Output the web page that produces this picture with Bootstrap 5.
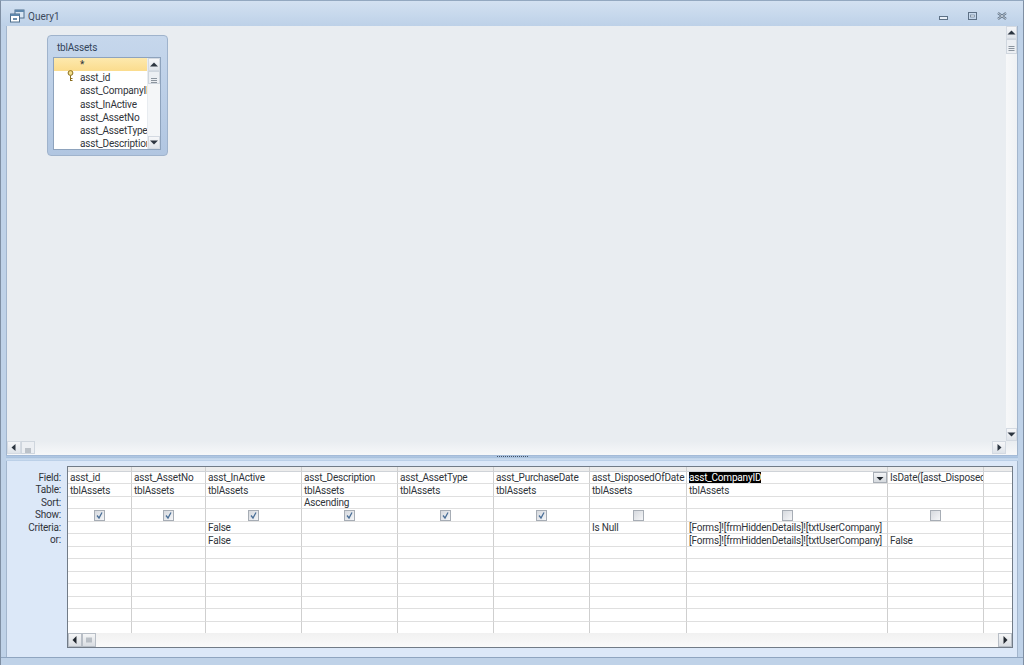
<!DOCTYPE html>
<html lang="en">
<head>
<meta charset="utf-8">
<title>Query1</title>
<link rel="stylesheet" href="https://cdn.jsdelivr.net/npm/bootstrap@5.3.0/dist/css/bootstrap.min.css">
<style>
html,body{height:100%;overflow:hidden}
body{font-family:Roboto,"Noto Sans",sans-serif;font-size:10px;letter-spacing:-.2px;color:#30343a;background:#b9cde5}
.qwin{height:665px;border-left:1px solid #7f8fa3;border-right:1px solid #7f8fa3;border-top:1px solid #93a8c0;background:#bfd2e8}
.qtitle{height:25px;background:linear-gradient(#d3e1f1,#bdd1e8);padding:5px 0 0 9px;flex:none}
.qtitle-text{font-size:10px;letter-spacing:0;color:#3c4a5c;margin-left:3px}
.winbtns{gap:20px;margin-right:16px}
.qbody{margin:0 5px;flex:1 1 auto;min-height:0}
.toppane{height:429px;flex:none;border:1px solid #a3b6cd;border-bottom:0;border-top:0}
.canvas{position:relative;flex:1 1 auto;background:#e9edf1}
.hbar,.vbar{background:#f2f4f6}
.hbar{height:14px;flex:none;background:linear-gradient(#e9edf1,#f7f8f9)}
.vbar{width:11px;flex:none;background:linear-gradient(90deg,#f7f8f9,#eef1f4)}
.sbtn{width:14px;height:13px;background:linear-gradient(#f6f7f9,#dfe4ea);border:1px solid #d4dae2;flex:none}
.sbtn svg{display:block}
.vbar .sbtn{width:11px}
.sthumb{width:14px;height:13px;background:#eceff3;border:1px solid #cfd6de;flex:none}
.vbar .sthumb{width:11px;height:15px}
.corner{width:11px;flex:none}
.tblbox{position:absolute;left:40px;top:9px;width:121px;height:121px;background:linear-gradient(#c6d7ec,#b1c6e1);border:1px solid #9fb3cc;border-radius:4px;padding:0 6px 5px 5px}
.tblname{height:21px;line-height:23px;font-size:10px;color:#33445a;padding-left:4px}
.tblinner{height:93px;background:#fff;border:1px solid #8ea3bd;overflow:hidden}
.tbllist{flex:1 1 auto;min-width:0;overflow:hidden}
.fld{height:13.3px;line-height:13.3px;padding-left:26px;white-space:nowrap;position:relative}
.fld-sel{background:linear-gradient(#fde9ae,#fbdc8d);height:13px}
.keyico{position:absolute;left:13px;top:-1px}
.tblscroll{width:13px;flex:none;background:#f4f6f8;border-left:1px solid #e8ecf0}
.tblscroll .sbtn{width:12px}
.tblscroll .sthumb{width:12px;height:13px}
.spliter{height:6px;flex:none;background:linear-gradient(#c2d5ec,#9db8d8 20%,#cfdff1 60%,#b5cbe5);position:relative;border-top:1px solid #a4bbd8}
.spliter i{position:absolute;left:491px;top:0;width:31px;height:2px;border-top:1px dotted #44556a}
.lowpane{flex:1 1 auto;background:#dce8f8;padding:5px 4px 9px 0;min-height:0;border-left:1px solid #a3b6cd;border-right:1px solid #a3b6cd}
.rlabels{width:60px;flex:none;padding-top:5.5px;text-align:right;padding-right:6px}
.rlabels div{height:12.6px;line-height:12.6px}
.gridbox{flex:1 1 auto;border:1px solid #717b87;background:#fff;min-width:0}
.qgrid{table-layout:fixed;border-collapse:separate;border-spacing:0;width:945px;font-size:10px}
.qgrid td,.qgrid th{padding:0 0 0 2px;line-height:11px;border-right:1px solid #cfcfcf;border-bottom:1px solid #dfdfdf;white-space:nowrap;overflow:hidden;font-weight:400;color:#30343a;box-sizing:border-box;position:relative}
.qgrid tbody tr:nth-child(odd) td{height:12px}
.qgrid tbody tr:nth-child(even) td{height:13px}
.qgrid th{height:5px;background:#ececec;padding:0;line-height:0;font-size:0;border-bottom:1px solid #cfd3d8}
.qgrid td:last-child,.qgrid th:last-child{border-right:0}
.qgrid td.chk{padding:0}
.c-1{width:64px}.c-2{width:74px}.c-3{width:96px}.c-4{width:97px}.c-5{width:201px}.c-6{width:29px}
.cbx{display:block;margin:1px auto 0;width:11px;height:11px;border:1px solid #a7adb5;background:linear-gradient(135deg,#d6d9de,#f5f6f8)}
.cbx svg{display:block}
.selt{background:#000;color:#fff;display:inline-block;line-height:11px;height:11px}
.ddbtn{position:absolute;right:0;top:0;width:14px;height:11px;background:linear-gradient(#f3f4f6,#d6dadf);border:1px solid #a8aeb6}
.ghbar{height:14px;flex:none;background:linear-gradient(#f1f1f1,#fafafa);margin-top:0}
.ghbar .sbtn{height:14px;background:linear-gradient(#f5f6f7,#d9dde2);border-color:#b8bec6}
.botstrip{height:8px;flex:none;border-top:1px solid #8fa5c0;margin:0 -5px;background:#bfd2e8}
</style>
</head>
<body>
<div class="qwin d-flex flex-column">
  <div class="qtitle d-flex align-items-center">
    <svg width="15" height="14" viewBox="0 0 15 14" aria-hidden="true"><rect x="5" y="1" width="9" height="8" fill="#d9e6f3" stroke="#4f6f8c"/><rect x="5" y="1" width="9" height="2" fill="#5f88ad"/><rect x=".5" y="5" width="9" height="8" fill="#fff" stroke="#4f6f8c"/><rect x=".5" y="5" width="9" height="2" fill="#5f88ad"/><rect x="3" y="9" width="4" height="2" fill="#6c8fae"/></svg>
    <span class="qtitle-text">Query1</span>
    <div class="winbtns ms-auto d-flex align-items-center">
      <svg width="9" height="4" viewBox="0 0 9 4" class="mt-1" aria-hidden="true"><rect x=".5" y=".5" width="8" height="3" fill="#e8eff7" stroke="#5d7085"/></svg>
      <svg width="9" height="8" viewBox="0 0 9 8" aria-hidden="true"><rect x=".5" y=".5" width="8" height="7" fill="none" stroke="#5d7085"/><rect x="2.500" y="3" width="4" height="2" fill="#e8eff7" stroke="#5d7085" stroke-width=".6"/></svg>
      <svg width="10" height="8" viewBox="0 0 10 8" aria-hidden="true"><path d="M1 1l8 6M9 1L1 7" stroke="#5d7085" stroke-width="2.200"/><path d="M1 1l8 6M9 1L1 7" stroke="#eef3f8" stroke-width=".7"/></svg>
    </div>
  </div>
  <div class="qbody d-flex flex-column">
    <div class="toppane d-flex">
      <div class="d-flex flex-column flex-grow-1">
        <div class="canvas">
          <div class="tblbox">
            <div class="tblname">tblAssets</div>
            <div class="tblinner d-flex">
              <div class="tbllist">
                <div class="fld fld-sel">*</div>
                <div class="fld"><svg class="keyico" width="7" height="12" viewBox="0 0 7 12" aria-hidden="true"><circle cx="3.500" cy="3" r="2.400" fill="#f4e08a" stroke="#8a6d1d"/><path d="M3.500 5.500V11M3.500 8.500h2M3.500 10.500h2" stroke="#8a6d1d" fill="none"/></svg>asst_id</div>
                <div class="fld">asst_CompanyID</div>
                <div class="fld">asst_InActive</div>
                <div class="fld">asst_AssetNo</div>
                <div class="fld">asst_AssetType</div>
                <div class="fld">asst_Description</div>
              </div>
              <div class="tblscroll d-flex flex-column">
                <div class="sbtn"><svg width="10" height="11" viewBox="0 0 10 11" aria-hidden="true"><path d="M1 7.500L5 3.500l4 4z" fill="#2c3540"/></svg></div>
                <div class="sthumb"><svg width="10" height="11" viewBox="0 0 10 11" aria-hidden="true"><path d="M2 3.500h6M2 5.500h6M2 7.500h6" stroke="#8b949e"/></svg></div>
                <div class="flex-grow-1"></div>
                <div class="sbtn"><svg width="10" height="11" viewBox="0 0 10 11" aria-hidden="true"><path d="M1 3.500l4 4 4-4z" fill="#2c3540"/></svg></div>
              </div>
            </div>
          </div>
        </div>
        <div class="hbar d-flex align-items-start">
          <div class="sbtn"><svg width="12" height="11" viewBox="0 0 12 11" aria-hidden="true"><path d="M7.500 2v7L3.500 5.500z" fill="#2c3540"/></svg></div>
          <div class="sthumb"><svg width="12" height="11" viewBox="0 0 12 11" aria-hidden="true"><path d="M4 3v5M6 3v5M8 3v5" stroke="#8b949e"/></svg></div>
          <div class="flex-grow-1"></div>
          <div class="sbtn"><svg width="12" height="11" viewBox="0 0 12 11" aria-hidden="true"><path d="M4.500 2v7l4-3.500z" fill="#2c3540"/></svg></div>
        </div>
      </div>
      <div class="d-flex flex-column corner">
        <div class="vbar d-flex flex-column flex-grow-1">
          <div class="sbtn"><svg width="9" height="11" viewBox="0 0 9 11" aria-hidden="true"><path d="M.5 7.500l4-4 4 4z" fill="#2c3540"/></svg></div>
          <div class="sthumb"><svg width="9" height="13" viewBox="0 0 9 13" aria-hidden="true"><path d="M1.500 4.500h6M1.500 6.500h6M1.500 8.500h6" stroke="#8b949e"/></svg></div>
          <div class="flex-grow-1"></div>
          <div class="sbtn"><svg width="9" height="11" viewBox="0 0 9 11" aria-hidden="true"><path d="M.5 3.500l4 4 4-4z" fill="#2c3540"/></svg></div>
        </div>
        <div class="hbar"></div>
      </div>
    </div>
    <div class="spliter"><i></i></div>
    <div class="lowpane d-flex">
      <div class="rlabels">
        <div>Field:</div><div>Table:</div><div>Sort:</div><div>Show:</div><div>Criteria:</div><div>or:</div>
      </div>
      <div class="gridbox d-flex flex-column overflow-hidden">
        <div class="flex-grow-1 overflow-hidden">
          <table class="qgrid">
            <colgroup><col class="c-1"><col class="c-2"><col class="c-3"><col class="c-3"><col class="c-3"><col class="c-3"><col class="c-4"><col class="c-5"><col class="c-3"><col class="c-6"></colgroup>
            <thead><tr><th>&nbsp;</th><th>&nbsp;</th><th>&nbsp;</th><th>&nbsp;</th><th>&nbsp;</th><th>&nbsp;</th><th>&nbsp;</th><th>&nbsp;</th><th>&nbsp;</th><th>&nbsp;</th></tr></thead>
            <tbody>
              <tr><td>asst_id</td><td>asst_AssetNo</td><td>asst_InActive</td><td>asst_Description</td><td>asst_AssetType</td><td>asst_PurchaseDate</td><td>asst_DisposedOfDate</td><td><span class="selt">asst_CompanyID</span><span class="ddbtn"><svg width="12" height="9" viewBox="0 0 12 9" class="d-block" aria-hidden="true"><path d="M2.500 4h7L6 7.500z" fill="#20262d"/></svg></span></td><td>IsDate([asst_Disposed</td><td></td></tr>
              <tr><td>tblAssets</td><td>tblAssets</td><td>tblAssets</td><td>tblAssets</td><td>tblAssets</td><td>tblAssets</td><td>tblAssets</td><td>tblAssets</td><td></td><td></td></tr>
              <tr><td></td><td></td><td></td><td>Ascending</td><td></td><td></td><td></td><td></td><td></td><td></td></tr>
              <tr>
                <td class="chk"><span class="cbx"><svg width="9" height="9" viewBox="0 0 9 9" aria-hidden="true"><path d="M2 4.500l2 2.500L7 1.500" fill="none" stroke="#4a6f97" stroke-width="1.300"/></svg></span></td>
                <td class="chk"><span class="cbx"><svg width="9" height="9" viewBox="0 0 9 9" aria-hidden="true"><path d="M2 4.500l2 2.500L7 1.500" fill="none" stroke="#4a6f97" stroke-width="1.300"/></svg></span></td>
                <td class="chk"><span class="cbx"><svg width="9" height="9" viewBox="0 0 9 9" aria-hidden="true"><path d="M2 4.500l2 2.500L7 1.500" fill="none" stroke="#4a6f97" stroke-width="1.300"/></svg></span></td>
                <td class="chk"><span class="cbx"><svg width="9" height="9" viewBox="0 0 9 9" aria-hidden="true"><path d="M2 4.500l2 2.500L7 1.500" fill="none" stroke="#4a6f97" stroke-width="1.300"/></svg></span></td>
                <td class="chk"><span class="cbx"><svg width="9" height="9" viewBox="0 0 9 9" aria-hidden="true"><path d="M2 4.500l2 2.500L7 1.500" fill="none" stroke="#4a6f97" stroke-width="1.300"/></svg></span></td>
                <td class="chk"><span class="cbx"><svg width="9" height="9" viewBox="0 0 9 9" aria-hidden="true"><path d="M2 4.500l2 2.500L7 1.500" fill="none" stroke="#4a6f97" stroke-width="1.300"/></svg></span></td>
                <td class="chk"><span class="cbx"></span></td><td class="chk"><span class="cbx"></span></td><td class="chk"><span class="cbx"></span></td><td></td>
              </tr>
              <tr><td></td><td></td><td>False</td><td></td><td></td><td></td><td>Is Null</td><td>[Forms]![frmHiddenDetails]![txtUserCompany]</td><td></td><td></td></tr>
              <tr><td></td><td></td><td>False</td><td></td><td></td><td></td><td></td><td>[Forms]![frmHiddenDetails]![txtUserCompany]</td><td>False</td><td></td></tr>
              <tr><td></td><td></td><td></td><td></td><td></td><td></td><td></td><td></td><td></td><td></td></tr>
              <tr><td></td><td></td><td></td><td></td><td></td><td></td><td></td><td></td><td></td><td></td></tr>
              <tr><td></td><td></td><td></td><td></td><td></td><td></td><td></td><td></td><td></td><td></td></tr>
              <tr><td></td><td></td><td></td><td></td><td></td><td></td><td></td><td></td><td></td><td></td></tr>
              <tr><td></td><td></td><td></td><td></td><td></td><td></td><td></td><td></td><td></td><td></td></tr>
              <tr><td></td><td></td><td></td><td></td><td></td><td></td><td></td><td></td><td></td><td></td></tr>
              <tr><td></td><td></td><td></td><td></td><td></td><td></td><td></td><td></td><td></td><td></td></tr>
            </tbody>
          </table>
        </div>
        <div class="ghbar d-flex">
          <div class="sbtn"><svg width="12" height="12" viewBox="0 0 12 12" aria-hidden="true"><path d="M7.500 2v8L3.500 6z" fill="#20262d"/></svg></div>
          <div class="sbtn"><svg width="12" height="12" viewBox="0 0 12 12" aria-hidden="true"><path d="M4 3.500v5M6 3.500v5M8 3.500v5" stroke="#8b949e"/></svg></div>
          <div class="flex-grow-1"></div>
          <div class="sbtn"><svg width="12" height="12" viewBox="0 0 12 12" aria-hidden="true"><path d="M4.500 2v8l4-4z" fill="#20262d"/></svg></div>
        </div>
      </div>
    </div>
    <div class="botstrip"></div>
  </div>
</div>
<script src="https://cdn.jsdelivr.net/npm/bootstrap@5.3.0/dist/js/bootstrap.bundle.min.js"></script>
</body>
</html>
